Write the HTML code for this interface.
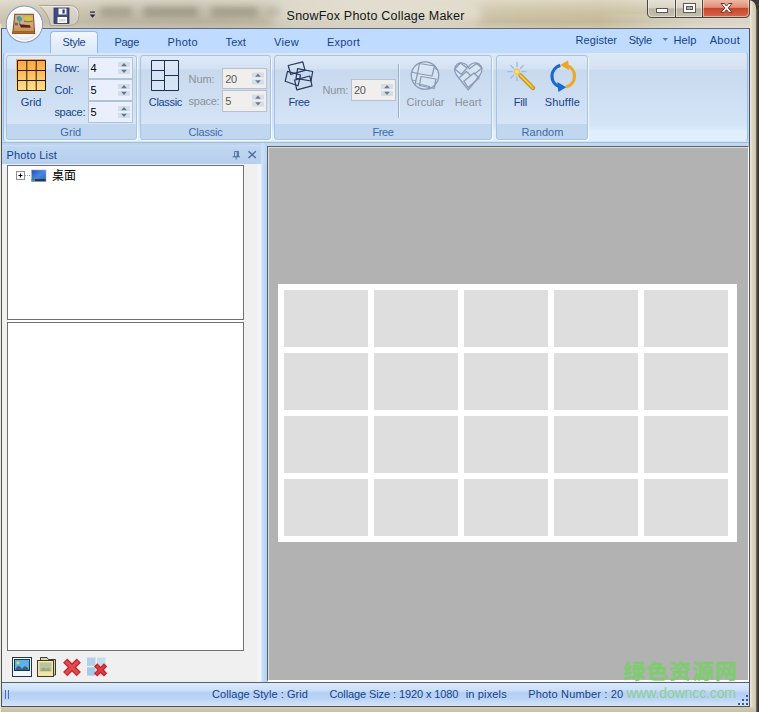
<!DOCTYPE html>
<html>
<head>
<meta charset="utf-8">
<title>SnowFox Photo Collage Maker</title>
<style>
html,body{margin:0;padding:0;}
body{width:759px;height:712px;overflow:hidden;position:relative;background:#d6ceb9;
 font-family:"Liberation Sans","Noto Sans CJK SC",sans-serif;font-size:11px;color:#15428b;}
.a{position:absolute;}
.t{position:absolute;white-space:pre;}
#titlebg{left:0;top:0;width:756px;height:28px;
 background:linear-gradient(90deg,#d2ccba 0px,#cdc6b3 60px,#c6bfac 110px,#c2bba8 200px,#c6bfab 260px,#cdc6b1 300px,#d3ccb6 360px,#d3ccb5 430px,#cfc5a8 520px,#cdc2a2 600px,#d1c9b1 660px,#d6cfbb 756px);}
#titleshade{left:0;top:0;width:756px;height:28px;background:linear-gradient(180deg,rgba(255,255,255,.32) 0,rgba(255,255,255,.12) 7px,rgba(0,0,0,.0) 12px,rgba(0,0,0,.05) 22px,rgba(255,255,255,.05) 28px);}
#titleglow{left:270px;top:4px;width:212px;height:22px;border-radius:11px;background:rgba(255,255,255,.35);filter:blur(5px);}
#rightdark{left:756px;top:0;width:3px;height:712px;background:linear-gradient(90deg,#77736a,#3e3d3b 60%,#2e2d2c);}
#rightframe{left:750px;top:0px;width:6px;height:712px;background:linear-gradient(90deg,#f0eadb,#ddd5c0 40%,#cfc6ae);}
#bottomframe{left:0;top:707px;width:756px;height:5px;background:linear-gradient(180deg,#d4cbb2,#c9bfa4);}
#leftframe{left:0;top:24px;width:1px;height:688px;background:#ebe6d8;}
#client{left:1px;top:28px;width:749px;height:679px;background:#bfdbff;box-sizing:border-box;border:1px solid #4e535b;border-top-color:#5f6b7c;}
#panel{left:3px;top:52px;width:745px;height:90px;border:1px solid #9dbde6;border-bottom-color:#d3e5fa;border-top-color:#c5d9f3;border-radius:4px;box-sizing:border-box;
 background:linear-gradient(180deg,#dde8f5 0,#d5e2f2 16px,#c9d9ee 17.500px,#d5e5f8 73px,#dfeefc 78px,#e2f1fd 90px);}
#tabsel{left:50px;width:48px;top:31px;height:22px;box-sizing:border-box;border:1px solid #96b7e0;border-bottom:none;border-radius:4px 4px 0 0;background:linear-gradient(180deg,#f1f6fd,#e3edfa 60%,#dce8f6);}
.grp{position:absolute;top:55px;height:85px;box-sizing:border-box;border:1px solid #a6c2e4;border-radius:3px;
 background:linear-gradient(180deg,#deeaf8 0,#d2e1f3 13px,#c8d9ee 14px,#d5e4f7 68px,#c1d7f0 68px,#c1d7f0 100%);box-shadow:1px 1px 0 rgba(255,255,255,.75);}
.edit{position:absolute;width:45px;height:22px;box-sizing:border-box;border:1px solid #b1c3da;background:#e9f0fb;}
.edit.dis{background:#f0efee;border-color:#b7c0cc;}
</style>
</head>
<body>
<svg width="0" height="0" style="position:absolute">
 <defs>
  <g id="spin">
   <rect x="0" y="0" width="12" height="5" fill="#d3deec"/>
   <rect x="0" y="7" width="12" height="5" fill="#d3deec"/>
   <path d="M3.2 4.2 L6 1 L8.8 4.2 Z" fill="#62768e"/>
   <path d="M3.2 7.8 L6 11 L8.8 7.8 Z" fill="#62768e"/>
  </g>
  <g id="spind">
   <rect x="0" y="0" width="12" height="5" fill="#d5dde7"/>
   <rect x="0" y="7" width="12" height="5" fill="#d5dde7"/>
   <path d="M3.2 4.2 L6 1 L8.8 4.2 Z" fill="#6d7a8a"/>
   <path d="M3.2 7.8 L6 11 L8.8 7.8 Z" fill="#6d7a8a"/>
  </g>
 </defs>
</svg>
<div class="a" id="titlebg"></div>
<div class="a" id="titleshade"></div>
<div class="a" style="left:100px;top:7px;width:32px;height:10px;background:#8f8a7a;opacity:.55;filter:blur(3px);border-radius:4px"></div>
<div class="a" style="left:143px;top:7px;width:55px;height:10px;background:#8a8576;opacity:.6;filter:blur(3px);border-radius:4px"></div>
<div class="a" style="left:211px;top:7px;width:47px;height:10px;background:#8a8576;opacity:.55;filter:blur(3px);border-radius:4px"></div>
<div class="a" style="left:268px;top:8px;width:14px;height:9px;background:#8a8576;opacity:.5;filter:blur(3px);border-radius:4px"></div>
<div class="a" id="titleglow"></div>
<div class="a" style="left:600px;top:14px;width:150px;height:14px;background:linear-gradient(90deg,rgba(255,255,255,0),rgba(255,255,255,.28) 70%);"></div>
<div class="a" id="rightframe"></div>
<div class="a" id="rightdark"></div>
<svg class="a" style="left:739px;top:0" width="20" height="12"><path d="M9.500 0 Q17 0.500 17.300 9 L20 12 V0 Z" fill="#3a3937"/></svg>
<div class="a" id="bottomframe"></div>
<div class="a" id="leftframe"></div>
<div class="a" id="client"></div>
<div class="a" id="panel"></div>
<div class="a" id="tabsel"></div>

<!-- window controls -->
<svg class="a" style="left:646px;top:0" width="105" height="19" viewBox="0 0 105 19">
 <defs>
  <linearGradient id="wb" x1="0" y1="0" x2="0" y2="1"><stop offset="0" stop-color="#e6e2d4"/><stop offset=".45" stop-color="#d8d3c3"/><stop offset=".5" stop-color="#b9b4a4"/><stop offset="1" stop-color="#c4bfae"/></linearGradient>
  <linearGradient id="wc" x1="0" y1="0" x2="0" y2="1"><stop offset="0" stop-color="#ecb9a6"/><stop offset=".42" stop-color="#df8e76"/><stop offset=".48" stop-color="#c8452a"/><stop offset="1" stop-color="#d8694e"/></linearGradient>
 </defs>
 <path d="M1.5 0 V13 Q1.5 17.5 6 17.5 H29.5 V0 Z" fill="url(#wb)"/>
 <path d="M29.5 0 H56.5 V17.5 H29.5 Z" fill="url(#wb)"/>
 <path d="M56.5 0 H103.5 V13 Q103.5 17.5 99 17.5 H56.5 Z" fill="url(#wc)"/>
 <path d="M1.5 0 V13 Q1.5 17.5 6 17.5 H99 Q103.5 17.5 103.5 13 V0 M29.5 0 V17.5 M56.5 0 V17.5" fill="none" stroke="#4a4740" stroke-width="1"/>
 <path d="M2.5 0 V13 Q2.5 16.5 6 16.5 H28.5 V0 M30.5 0 V16.5 H55.5 V0 M57.5 0 V16.5 H99 Q102.5 16.5 102.5 13 V0" fill="none" stroke="rgba(255,255,255,.45)" stroke-width="1"/>
 <rect x="10.5" y="8.5" width="11" height="4" fill="#fff" stroke="#5a5850" stroke-width="1"/>
 <rect x="37.5" y="3.5" width="12" height="9" fill="#fff" stroke="#5a5850" stroke-width="1"/>
 <rect x="40.5" y="6.5" width="6" height="3" fill="#b9b5a6" stroke="#5a5850" stroke-width="1"/>
 <path d="M75 3.5 h3.4 l2.1 2.6 l2.1 -2.6 h3.4 l-3.8 4.4 l3.8 4.4 h-3.4 l-2.1 -2.6 l-2.1 2.6 h-3.4 l3.8 -4.4 z" fill="#fff" stroke="#6b3328" stroke-width="1" stroke-linejoin="round"/>
</svg>

<!-- QAT -->
<svg class="a" style="left:36px;top:3px" width="64" height="25" viewBox="0 0 64 25">
 <path d="M3 2.500 H33 Q43 2.500 43 12.500 Q43 22.500 33 22.500 H14.500 Q12.500 10 3 2.500 Z" fill="rgba(255,255,255,.25)" stroke="#a8a291" stroke-width="1"/>
 <path d="M3 3.5 H33 Q42 3.5 42 12.5" fill="none" stroke="rgba(255,255,255,.5)" stroke-width="1"/>
 <!-- save icon at 54,8 => local 18,5 -->
 <rect x="18" y="5" width="15" height="15.500" fill="#3d4c7c"/>
 <rect x="18" y="5" width="15" height="15.500" fill="none" stroke="#2f3b63" stroke-width=".8"/>
 <rect x="22.500" y="5.500" width="8" height="6" fill="#f4f6fa"/>
 <rect x="26.500" y="6.500" width="2.200" height="4" fill="#2e3a60"/>
 <rect x="21.500" y="14" width="9.500" height="6" fill="#fbfbfb"/>
 <rect x="23" y="16" width="6.500" height="2.500" fill="#d8d8d8"/>
 <!-- dropdown -->
 <rect x="54" y="8.500" width="5" height="1.200" fill="#1d2a52"/>
 <path d="M53.6 11.5 H59.4 L56.5 14.8 Z" fill="#1d2a52"/>
</svg>

<!-- app button -->
<svg class="a" style="left:3px;top:3px" width="44" height="44" viewBox="0 0 44 44">
 <defs>
  <radialGradient id="ab" cx=".5" cy=".4" r=".62"><stop offset="0" stop-color="#ffffff"/><stop offset=".7" stop-color="#f4f5f8"/><stop offset="1" stop-color="#d3d8e3"/></radialGradient>
  <linearGradient id="pic" x1="0" y1="0" x2="0" y2="1"><stop offset="0" stop-color="#d2a878"/><stop offset=".5" stop-color="#d3ac82"/><stop offset="1" stop-color="#c4914f"/></linearGradient>
  <filter id="bl" x="-10%" y="-10%" width="120%" height="120%"><feGaussianBlur stdDeviation=".55"/></filter>
 </defs>
 <circle cx="21.400" cy="21.200" r="18.100" fill="url(#ab)" stroke="#949db2" stroke-width="1.100"/>
 <circle cx="21.400" cy="21.200" r="16.700" fill="none" stroke="rgba(255,255,255,.95)" stroke-width="1.400"/>
 <g filter="url(#bl)">
  <path d="M11.400 10.800 H30.800 L32.200 31 H9.100 Z" fill="#7e4a1a"/>
  <path d="M12.300 11.800 H29.900 L31 28.200 H10.500 Z" fill="url(#pic)"/>
  <path d="M9.600 28.600 H31.700 L31.900 30.600 H9.400 Z" fill="#a8692a"/>
  <path d="M12.500 12.300 H20 L19.500 17 H12.200 Z" fill="#c9b7a0" opacity=".7"/>
  <path d="M13.500 14.500 q2.500 -2.800 5 0 q1.200 1.500 0 3.200 l-1.300 0.200 l0.300 4 h-1.600 l0 -4 q-2.600 0 -2.400 -3.400z" fill="#4f9a96"/>
  <ellipse cx="25" cy="15.600" rx="4.200" ry="2.300" fill="#d9c440"/>
  <path d="M21 17.500 q4 2 8.500 0 l0 1 q-4.500 1.500 -8.500 0z" fill="#4d6a2a"/>
  <path d="M16.500 21.300 L27 22.300 L27.600 24.800 L17.800 24.600 Z" fill="#5d2320"/>
  <path d="M12 19.500 l3 0.500 l-0.300 2.500 l-2.900 -0.300z" fill="#6a4a5a" opacity=".8"/>
 </g>
</svg>

<!-- ribbon groups -->
<div class="grp" style="left:6px;width:131px;"></div>
<div class="grp" style="left:140px;width:131px;"></div>
<div class="grp" style="left:274px;width:218px;"></div>
<div class="grp" style="left:496px;width:92px;"></div>

<!-- edits -->
<div class="edit" style="left:88px;top:57px;"></div>
<div class="edit" style="left:88px;top:79px;"></div>
<div class="edit" style="left:88px;top:101px;"></div>
<div class="edit dis" style="left:222px;top:68px;height:21px"></div>
<div class="edit dis" style="left:222px;top:90px;height:22px"></div>
<div class="edit dis" style="left:351px;top:79px;height:22px"></div>
<svg class="a" style="left:0;top:0" width="759" height="150">
 <use href="#spin" x="118" y="62"/>
 <use href="#spin" x="118" y="84"/>
 <use href="#spin" x="118" y="106"/>
 <use href="#spind" x="252" y="72.500"/>
 <use href="#spind" x="252" y="94.500"/>
 <use href="#spind" x="381" y="84"/>
 <!-- separator -->
 <rect x="398" y="64" width="1" height="54" fill="#9bb0ca"/>
 <rect x="399" y="64" width="1" height="54" fill="rgba(255,255,255,.5)"/>
 <!-- style menu arrow -->
 <path d="M662.500 38 H668 L665.250 41 Z" fill="#5879ad"/>

 <!-- Grid icon -->
 <defs><linearGradient id="og" x1="0" y1="0" x2="0" y2="1"><stop offset="0" stop-color="#fba53a"/><stop offset=".5" stop-color="#fcc260"/><stop offset="1" stop-color="#fde391"/></linearGradient></defs>
 <rect x="16" y="59" width="30" height="32.500" fill="url(#og)"/>
 <path d="M17.500 60.500 H45.500 V90.500 H17.500 Z M26.800 60.500 V90.500 M36.200 60.500 V90.500 M17.500 70.500 H45.500 M17.500 80.500 H45.500" fill="none" stroke="#2b1c05" stroke-width="1"/>

 <!-- Classic icon -->
 <path d="M151.500 60.500 H178.500 V90.500 H151.500 Z M164.500 60.500 V90.500 M151.500 70.500 H164.500 M151.500 80.500 H164.500 M164.500 75.500 H178.500" fill="rgba(225,236,250,.5)" stroke="#1e2e4d" stroke-width="1"/>

 <!-- Free icon -->
 <g fill="none" stroke="#25395c" stroke-width="1.200" stroke-linejoin="round">
  <path d="M285.200 81.300 L287.500 71.300 L300.500 75 L298 85.800 Z"/>
  <path d="M288.200 65.500 L302.800 61.800 L305 70.300 L290.700 74.400 Z"/>
  <path d="M297.600 68.600 L312.700 71.500 L311 81 L296 78.300 Z"/>
  <path d="M294.600 80.100 L309.800 76 L312 85.800 L296.800 89.900 Z"/>
 </g>

 <!-- Circular icon -->
 <g fill="none" stroke="#8a9ab3" stroke-width="1.250" stroke-linejoin="round">
  <circle cx="425" cy="75.500" r="13.700" fill="rgba(225,235,248,.5)"/>
  <path d="M419.500 63.500 L434.500 66 L432 76 L417.500 73.500 Z"/>
  <path d="M411.800 72 L417.500 73.500 L415 84.500 M412.500 80 L416 81"/>
  <path d="M421 76.500 L436 79 L434 88.500 L419.500 85.500 Z"/>
  <path d="M416.500 83.500 L429.500 86.500 L428.500 89"/>
  <path d="M434.500 68 L438 70"/>
 </g>
 <!-- Heart icon -->
 <g fill="none" stroke="#8a9ab3" stroke-width="1.250" stroke-linejoin="round">
  <path d="M468.300 67.800 C466.500 63 461 61.800 457.500 64 C454 66.500 453.800 71 456.500 75 L468.300 89.800 L480 75 C482.800 71 482.500 66.500 479 64 C475.500 61.800 470 63 468.300 67.800 Z" fill="rgba(225,235,248,.5)"/>
  <path d="M454.800 69 L460.500 63 L467 68 L461.200 74.300 Z"/>
  <path d="M468.800 69.200 L476.400 63.500 L482 68 L474.500 74"/>
  <path d="M463.800 81.200 L473.900 73 L479 78 L468.200 87.500 Z"/>
  <path d="M459.500 77.500 L466.500 71.500 L470.500 75.500"/>
 </g>

 <!-- Fill icon (wand) -->
 <g>
  <path d="M520.500 75.500 L533 88" stroke="#b8860b" stroke-width="4.200" stroke-linecap="round"/>
  <path d="M520.500 75.500 L533 88" stroke="#eab628" stroke-width="2.600" stroke-linecap="round"/>
  <path d="M520.300 75 L531.500 86.200" stroke="#f8dc78" stroke-width="1" stroke-linecap="round"/>
  <g stroke="#9bb8ea" stroke-width="1.300" stroke-linecap="round">
   <path d="M517 62.500 V66.500"/><path d="M517 77 V80.500"/>
   <path d="M508 71.700 H512"/><path d="M522 71.700 H526"/>
   <path d="M510.800 65.500 L513.500 68.200"/><path d="M523.200 65.500 L520.500 68.200"/>
   <path d="M510.800 78 L513.500 75.300"/>
  </g>
  <circle cx="517" cy="71.700" r="3.300" fill="#f6c445"/>
  <circle cx="517" cy="71.700" r="1.800" fill="#fbe08a"/>
 </g>
 <!-- Shuffle icon -->
 <g fill="none" stroke-linecap="butt">
  <path d="M560.300 65.400 A11.200 11.200 0 0 0 559.500 86.800" stroke="#1a69cd" stroke-width="3.200"/>
  <path d="M557.300 82 L566.300 87.200 L558.300 92 Z" fill="#1a69cd" stroke="none"/>
  <path d="M566.100 87 A11.200 11.200 0 0 0 567 65.600" stroke="#eda726" stroke-width="3.200"/>
  <path d="M569 70.300 L560.200 64.900 L568.200 60.300 Z" fill="#eda726" stroke="none"/>
 </g>
</svg>

<div class="a" style="left:2px;top:142px;width:747px;height:1px;background:#a2bddd;"></div>
<div class="a" style="left:2px;top:143px;width:747px;height:3px;background:#c3d6ef;"></div>
<!-- left pane -->
<div class="a" style="left:2px;top:143px;width:260px;height:539px;background:#f0f0f0;"></div>
<div class="a" style="left:2px;top:143px;width:259px;height:21px;background:linear-gradient(180deg,#bdd4f1 0,#bdd4f1 2px,#cbdef6 2px,#bfd6f2 4px,#b7cfee 21px);"></div>
<div class="a" style="left:7px;top:165px;width:237px;height:155px;box-sizing:border-box;border:1px solid #6e7074;background:#fff;"></div>
<div class="a" style="left:8px;top:320px;width:235px;height:2px;background:#fff;"></div>
<div class="a" style="left:7px;top:322px;width:237px;height:329px;box-sizing:border-box;border:1px solid #6e7074;background:#fff;"></div>
<svg class="a" style="left:0;top:142px" width="267" height="45">
 <!-- pin -->
 <g fill="none" stroke="#5373a3" stroke-width="1">
  <path d="M234.500 9.500 H238.500 V14.500 H234.500 Z"/><path d="M237.300 9.500 V14.500" stroke-width="1.200"/>
  <path d="M232.500 14.800 H240"/><path d="M236.200 15 V17.500"/>
 </g>
 <path d="M248.500 9.300 L255.800 16 M255.800 9.300 L248.500 16" stroke="#46689a" stroke-width="1.300" fill="none"/>
 <!-- tree plus -->
 <rect x="16.500" y="29.500" width="8" height="8" fill="#fff" stroke="#919191" stroke-width="1"/>
 <path d="M18.500 33.500 H22.500 M20.500 31.500 V35.500" stroke="#000" stroke-width="1"/>
 <path d="M25 33.500 H31" stroke="#9a9a9a" stroke-width="1" stroke-dasharray="1 1"/>
 <!-- desktop icon -->
 <defs><linearGradient id="dk" x1="0" y1="0" x2="1" y2="1"><stop offset="0" stop-color="#1d4ec0"/><stop offset=".5" stop-color="#4b86dd"/><stop offset="1" stop-color="#2c62c4"/></linearGradient></defs>
 <rect x="31.500" y="28" width="14.500" height="11.500" fill="url(#dk)"/>
 <rect x="31.500" y="37" width="14.500" height="2.500" fill="#243a4a"/>
 <rect x="32" y="37.300" width="3" height="1.700" fill="#5aa05a"/>
 <rect x="31.500" y="28" width="14.500" height="11.500" fill="none" stroke="#9fb0c8" stroke-width=".6"/>
</svg>

<!-- bottom icons -->
<svg class="a" style="left:0;top:652px" width="120" height="30">
 <!-- photo -->
 <rect x="12.500" y="5.500" width="19" height="19" fill="#f4f7fa" stroke="#1c3550" stroke-width="1"/>
 <rect x="14.500" y="7.500" width="15" height="11" fill="#58b3ea" stroke="#1c3550" stroke-width="1"/>
 <circle cx="18" cy="10.800" r="1.600" fill="#f0d050"/>
 <path d="M15 18 Q18.500 10.500 22 17 Q25 11 29 18 Z" fill="#3a5f80"/>
 <!-- folder -->
 <path d="M40.500 5.500 H47 L48.500 7.500 H55.500 V23 H40.500 Z" fill="#d9d4a6" stroke="#3b3a2d" stroke-width="1"/>
 <rect x="37.500" y="8.500" width="16" height="16" fill="#efe6a8" stroke="#3b3a2d" stroke-width="1"/>
 <rect x="39.500" y="10.500" width="12" height="9" fill="#b9c49a"/>
 <path d="M40 19 Q43 13 46 17.500 Q48.500 13.500 51 19 Z" fill="#9aa784"/>
 <!-- red X -->
 <path d="M65.200 8.600 L78.800 22.200 M78.800 8.600 L65.200 22.200" stroke="#c3272d" stroke-width="6" stroke-linecap="butt"/>
 <path d="M66 9.400 L78 21.400 M78 9.400 L66 21.400" stroke="#e04a4f" stroke-width="3.400" stroke-linecap="butt"/>
 <!-- grid + X -->
 <rect x="87" y="5.500" width="8.500" height="8.300" fill="#b3d0e8"/><rect x="97" y="5.500" width="8.500" height="8.300" fill="#c6ddef"/>
 <rect x="87" y="15.300" width="8.500" height="8.300" fill="#a6c9e5"/><rect x="97" y="15.300" width="8.500" height="8.300" fill="#c3dbee"/>
 <path d="M95.600 12.800 L105.600 22.800 M105.600 12.800 L95.600 22.800" stroke="#bf2329" stroke-width="4.600" stroke-linecap="butt"/>
 <path d="M96.300 13.500 L104.900 22.100 M104.900 13.500 L96.300 22.100" stroke="#dc3c42" stroke-width="2.400" stroke-linecap="butt"/>
</svg>

<!-- splitter -->
<div class="a" style="left:257px;top:164px;width:10px;height:518px;background:linear-gradient(90deg,#f0f0f0 0,#f5f7fb 1.500px,#edf3fc 4px,#c9def9 5px,#bed8f7 7.500px,#b3cff4 9.500px);"></div>
<div class="a" style="left:261px;top:143px;width:6px;height:21px;background:linear-gradient(90deg,#cde0fa,#c3dbfa 50%,#b8d2f5);"></div>

<!-- canvas -->
<div class="a" style="left:267px;top:146px;width:482px;height:536px;background:#b2b2b2;box-sizing:border-box;border-left:1px solid #5d6266;border-top:1px solid #5d6266;border-right:1px solid #fff;border-bottom:2px solid #fff;"></div>
<div class="a" style="left:268px;top:147px;width:480px;height:1px;background:#dcdcd6;"></div>
<div class="a" style="left:268px;top:147px;width:1px;height:533px;background:#dcdcd6;"></div>
<div class="a" style="left:278px;top:284px;width:459px;height:258px;background:#fff;"></div>
<svg class="a" style="left:278px;top:284px;" width="459" height="258"><rect x="6" y="6" width="84" height="57" fill="#dedede"/><rect x="96" y="6" width="84" height="57" fill="#dedede"/><rect x="186" y="6" width="84" height="57" fill="#dedede"/><rect x="276" y="6" width="84" height="57" fill="#dedede"/><rect x="366" y="6" width="84" height="57" fill="#dedede"/><rect x="6" y="69" width="84" height="57" fill="#dedede"/><rect x="96" y="69" width="84" height="57" fill="#dedede"/><rect x="186" y="69" width="84" height="57" fill="#dedede"/><rect x="276" y="69" width="84" height="57" fill="#dedede"/><rect x="366" y="69" width="84" height="57" fill="#dedede"/><rect x="6" y="132" width="84" height="57" fill="#dedede"/><rect x="96" y="132" width="84" height="57" fill="#dedede"/><rect x="186" y="132" width="84" height="57" fill="#dedede"/><rect x="276" y="132" width="84" height="57" fill="#dedede"/><rect x="366" y="132" width="84" height="57" fill="#dedede"/><rect x="6" y="195" width="84" height="57" fill="#dedede"/><rect x="96" y="195" width="84" height="57" fill="#dedede"/><rect x="186" y="195" width="84" height="57" fill="#dedede"/><rect x="276" y="195" width="84" height="57" fill="#dedede"/><rect x="366" y="195" width="84" height="57" fill="#dedede"/></svg>

<!-- status bar -->
<div class="a" style="left:2px;top:682px;width:747px;height:25px;box-sizing:border-box;border-top:1px solid #56606e;border-bottom:1px solid #4d5158;background:linear-gradient(180deg,#dbe9fb 0,#cde0f9 7px,#b4cff4 10px,#bcd5f6 16px,#d3e4f9 23px);"></div>
<svg class="a" style="left:0;top:682px" width="759" height="25">
 <path d="M5.500 8 V17 M8.500 8 V17" stroke="#4a6fb0" stroke-width="1"/>
 <g fill="#3c5a88">
  <rect x="746" y="13" width="2" height="2"/>
  <rect x="742" y="17" width="2" height="2"/><rect x="746" y="17" width="2" height="2"/>
  <rect x="738" y="21" width="2" height="2"/><rect x="742" y="21" width="2" height="2"/><rect x="746" y="21" width="2" height="2"/>
 </g>
</svg>

<div class="t" style="left:286.6px;top:9.97px;font-size:12.5px;line-height:12.5px;color:#151515;letter-spacing:0.211px;">SnowFox Photo Collage Maker</div>
<div class="t" style="left:62.5px;top:37.24px;font-size:11px;line-height:11px;color:#15428b;letter-spacing:-0.334px;">Style</div>
<div class="t" style="left:114.4px;top:37.24px;font-size:11px;line-height:11px;color:#15428b;letter-spacing:-0.276px;">Page</div>
<div class="t" style="left:167.6px;top:37.24px;font-size:11px;line-height:11px;color:#15428b;letter-spacing:0.290px;">Photo</div>
<div class="t" style="left:225.6px;top:37.24px;font-size:11px;line-height:11px;color:#15428b;letter-spacing:0.053px;">Text</div>
<div class="t" style="left:274.0px;top:37.24px;font-size:11px;line-height:11px;color:#15428b;letter-spacing:0.336px;">View</div>
<div class="t" style="left:327.0px;top:37.24px;font-size:11px;line-height:11px;color:#15428b;letter-spacing:0.201px;">Export</div>
<div class="t" style="left:575.5px;top:35.24px;font-size:11px;line-height:11px;color:#15428b;letter-spacing:0.079px;">Register</div>
<div class="t" style="left:628.8px;top:35.24px;font-size:11px;line-height:11px;color:#15428b;letter-spacing:-0.294px;">Style</div>
<div class="t" style="left:673.4px;top:35.24px;font-size:11px;line-height:11px;color:#15428b;letter-spacing:0.094px;">Help</div>
<div class="t" style="left:709.7px;top:35.24px;font-size:11px;line-height:11px;color:#15428b;letter-spacing:0.350px;">About</div>
<div class="t" style="left:20.8px;top:97.24px;font-size:11px;line-height:11px;color:#15428b;letter-spacing:-0.045px;">Grid</div>
<div class="t" style="left:54.4px;top:63.24px;font-size:11px;line-height:11px;color:#15428b;letter-spacing:0.059px;">Row:</div>
<div class="t" style="left:54.4px;top:85.24px;font-size:11px;line-height:11px;color:#15428b;letter-spacing:-0.141px;">Col:</div>
<div class="t" style="left:54.4px;top:107.24px;font-size:11px;line-height:11px;color:#15428b;letter-spacing:-0.270px;">space:</div>
<div class="t" style="left:90.6px;top:63.24px;font-size:11px;line-height:11px;color:#000;">4</div>
<div class="t" style="left:90.6px;top:85.24px;font-size:11px;line-height:11px;color:#000;">5</div>
<div class="t" style="left:90.6px;top:107.24px;font-size:11px;line-height:11px;color:#000;">5</div>
<div class="t" style="left:60.3px;top:127.24px;font-size:11px;line-height:11px;color:#3e6aaa;letter-spacing:0.055px;">Grid</div>
<div class="t" style="left:148.8px;top:97.24px;font-size:11px;line-height:11px;color:#15428b;letter-spacing:-0.322px;">Classic</div>
<div class="t" style="left:188.6px;top:74.24px;font-size:11px;line-height:11px;color:#8c9299;letter-spacing:-0.095px;">Num:</div>
<div class="t" style="left:188.6px;top:96.24px;font-size:11px;line-height:11px;color:#8c9299;letter-spacing:-0.287px;">space:</div>
<div class="t" style="left:225.3px;top:74.24px;font-size:11px;line-height:11px;color:#5a5a5a;letter-spacing:-0.425px;">20</div>
<div class="t" style="left:225.3px;top:96.24px;font-size:11px;line-height:11px;color:#5a5a5a;">5</div>
<div class="t" style="left:188.5px;top:127.24px;font-size:11px;line-height:11px;color:#3e6aaa;letter-spacing:-0.208px;">Classic</div>
<div class="t" style="left:288.6px;top:97.24px;font-size:11px;line-height:11px;color:#15428b;letter-spacing:-0.456px;">Free</div>
<div class="t" style="left:322.5px;top:85.24px;font-size:11px;line-height:11px;color:#8c9299;letter-spacing:-0.145px;">Num:</div>
<div class="t" style="left:354.1px;top:85.24px;font-size:11px;line-height:11px;color:#5a5a5a;letter-spacing:-0.425px;">20</div>
<div class="t" style="left:406.6px;top:97.24px;font-size:11px;line-height:11px;color:#8c9299;letter-spacing:-0.001px;">Circular</div>
<div class="t" style="left:454.7px;top:97.24px;font-size:11px;line-height:11px;color:#8c9299;letter-spacing:-0.021px;">Heart</div>
<div class="t" style="left:372.5px;top:127.24px;font-size:11px;line-height:11px;color:#3e6aaa;letter-spacing:-0.406px;">Free</div>
<div class="t" style="left:513.7px;top:97.24px;font-size:11px;line-height:11px;color:#15428b;letter-spacing:-0.191px;">Fill</div>
<div class="t" style="left:544.7px;top:97.24px;font-size:11px;line-height:11px;color:#15428b;letter-spacing:0.191px;">Shuffle</div>
<div class="t" style="left:521.5px;top:127.24px;font-size:11px;line-height:11px;color:#3e6aaa;letter-spacing:0.070px;">Random</div>
<div class="t" style="left:6.5px;top:150.24px;font-size:11px;line-height:11px;color:#15428b;letter-spacing:0.158px;">Photo List</div>
<div class="t" style="left:52.0px;top:170.39px;font-size:12px;line-height:12px;color:#000;">桌面</div>
<div class="t" style="left:212.0px;top:689.24px;font-size:11px;line-height:11px;color:#15428b;letter-spacing:0.062px;">Collage Style : Grid</div>
<div class="t" style="left:329.5px;top:689.24px;font-size:11px;line-height:11px;color:#15428b;letter-spacing:-0.103px;">Collage Size : 1920 x 1080</div>
<div class="t" style="left:465.7px;top:689.24px;font-size:11px;line-height:11px;color:#15428b;letter-spacing:0.161px;">in pixels</div>
<div class="t" style="left:528.3px;top:689.24px;font-size:11px;line-height:11px;color:#15428b;letter-spacing:0.156px;">Photo Number : 20</div>

<!-- watermark -->
<div class="t" style="left:623.500px;top:657.900px;font-size:22px;line-height:32px;font-weight:bold;color:#7fcc70;-webkit-text-stroke:.4px #7fcc70;letter-spacing:0.900px;transform:scaleY(.92);transform-origin:0 0;">绿色资源网</div>
<div class="t" style="left:626.400px;top:685.600px;font-size:14px;line-height:14px;color:#8bcf92;letter-spacing:-0.130px;">www.downcc.com</div>
</body>
</html>
